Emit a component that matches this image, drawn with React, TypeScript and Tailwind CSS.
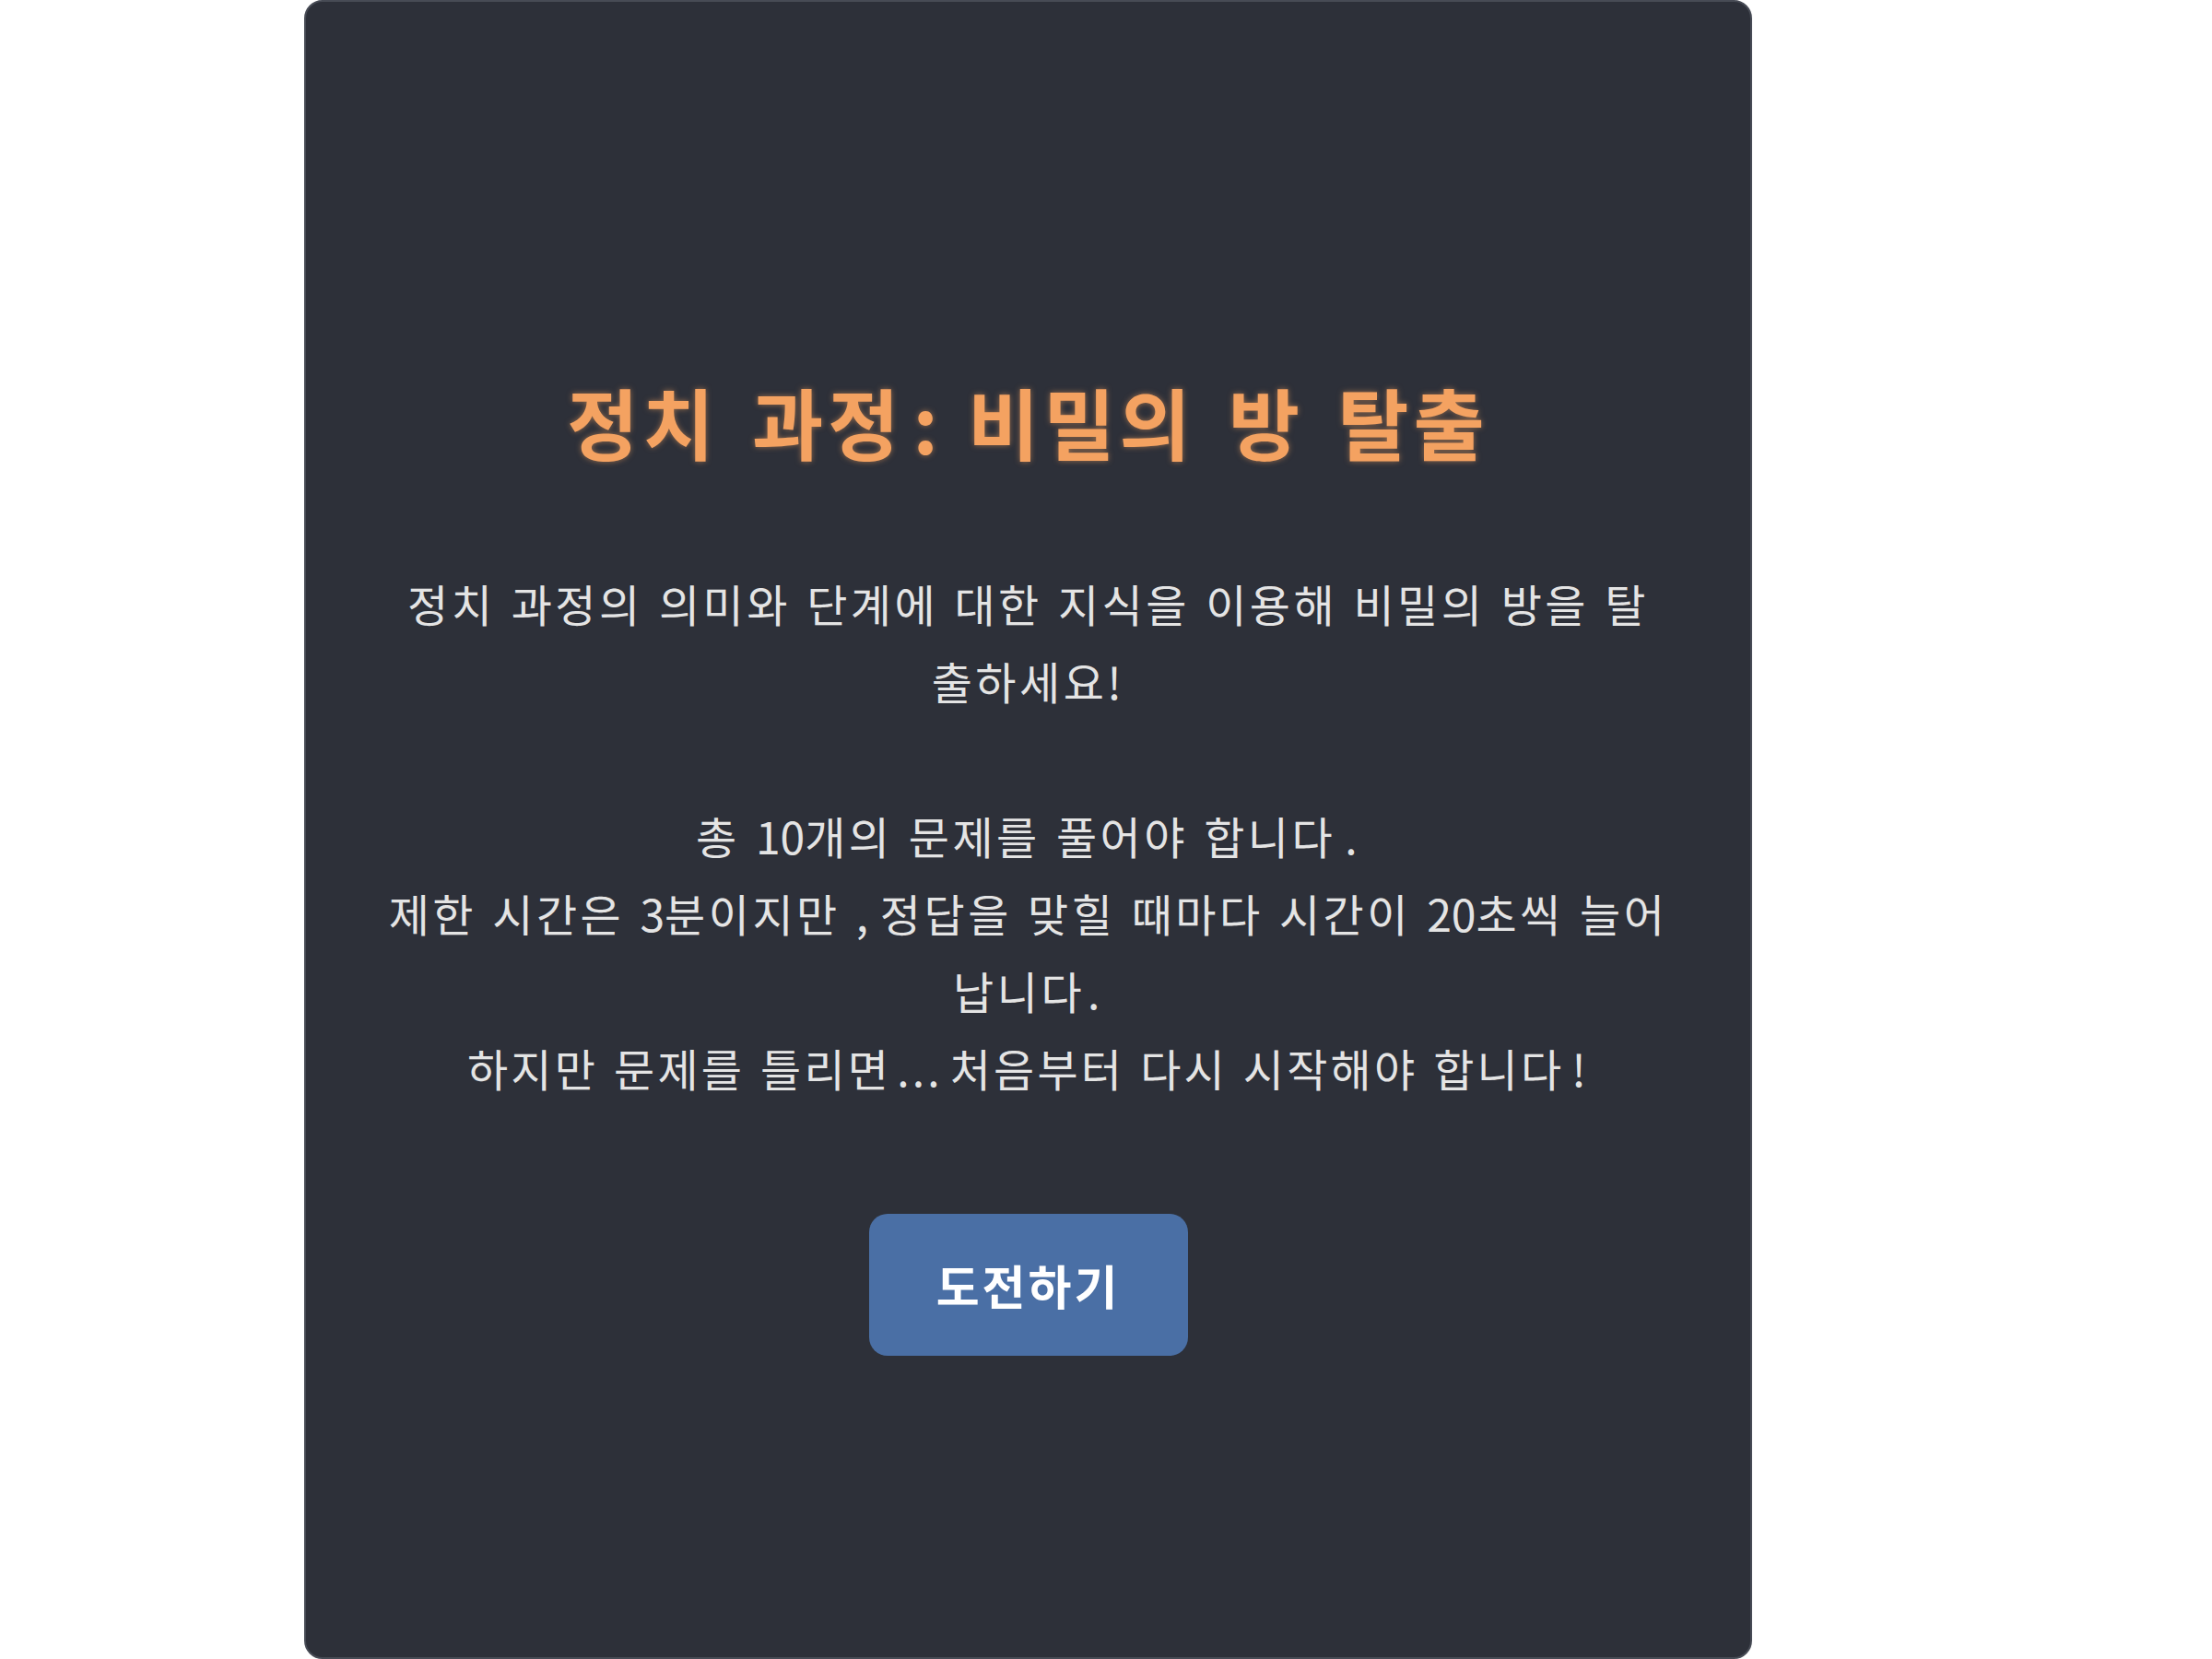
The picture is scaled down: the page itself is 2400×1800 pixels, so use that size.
export default function App() {
  const font = { fontFamily: '"Noto Sans CJK KR", "Noto Sans", sans-serif' };
  return (
    <div className="min-h-screen bg-white" style={font}>
      <div className="ml-[330px] flex h-[1800px] w-[1571px] flex-col items-center rounded-[20px] border-2 border-[#474b55] bg-[#2d3039] pt-[407px]">
        <h1 className="text-[84px] font-bold leading-[96px] tracking-[5px] text-[#f4a261] [word-spacing:12px] [text-shadow:0_0_6px_rgba(244,162,97,0.55)]">
          정치 과정<span className="ml-[10px] [word-spacing:3px]">: </span>비밀의 방 탈출
        </h1>
        <div className="mt-[107px] text-center text-[48px] leading-[84px] tracking-[3.5px] text-[#e4e4e4] [word-spacing:3px]">
          <p>정치 과정의 의미와 단계에 대한 지식을 이용해 비밀의 방을 탈</p>
          <p>출하세요!</p>
          <p className="h-[84px]" />
          <p>
            총 <span className="tracking-normal">10</span>개의 문제를 풀어야 합니다
            <span className="ml-[10px]">.</span>
          </p>
          <p>
            제한 시간은 <span className="tracking-normal">3</span>분이지만
            <span className="ml-[17px] [word-spacing:-5px]">, </span>정답을 맞힐 때마다 시간이{' '}
            <span className="tracking-normal">20</span>초씩 늘어
          </p>
          <p>
            납니다<span className="ml-[3px]">.</span>
          </p>
          <p className="tracking-[3.2px]">
            하지만 문제를 틀리면<span className="ml-[6px] [word-spacing:-6px]">... </span>처음부터 다시 시작해야
            합니다<span className="ml-[8px]">!</span>
          </p>
        </div>
        <button className="mt-[117px] flex h-[154px] w-[346px] items-center justify-center rounded-[20px] bg-[#4a6fa5] text-[51px] font-bold tracking-[3px] text-white">
          도전하기
        </button>
      </div>
    </div>
  );
}
